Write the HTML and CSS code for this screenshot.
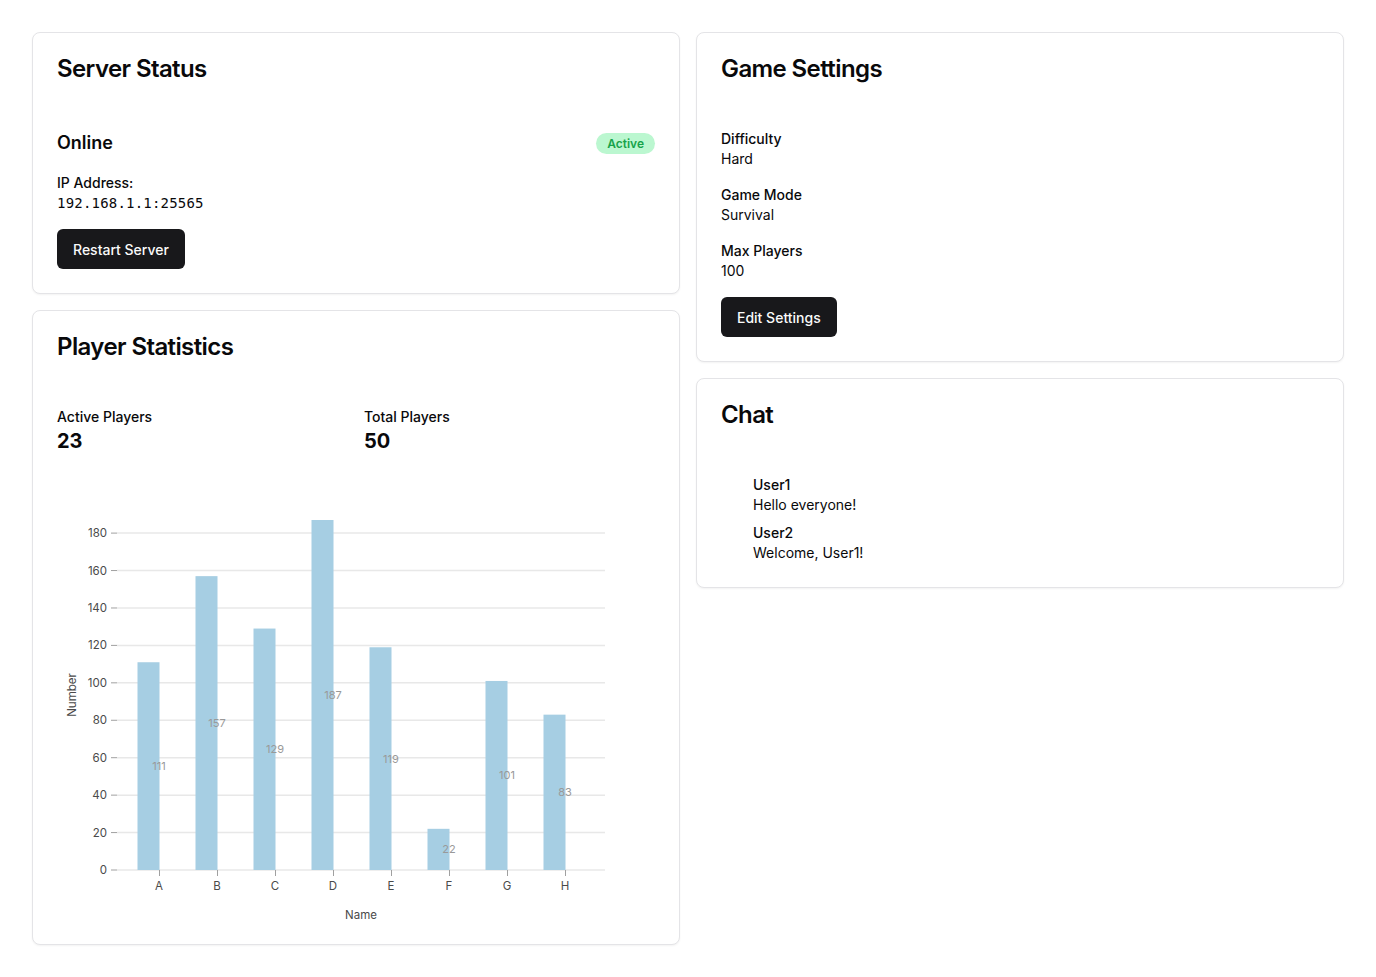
FILE: index.html
```html
<!DOCTYPE html>
<html lang="en">
<head>
<meta charset="utf-8">
<title>Server Dashboard</title>
<link rel="stylesheet" href="styles.css">
</head>
<body>
<div class="grid">
  <div class="col">
    <section class="card">
      <h2 class="card-title">Server Status</h2>
      <div class="status-row">
        <span class="status-text">Online</span>
        <span class="badge">Active</span>
      </div>
      <div class="field">
        <div class="label">IP Address:</div>
        <div class="mono">192.168.1.1:25565</div>
      </div>
      <button class="btn">Restart Server</button>
    </section>
    <section class="card">
      <h2 class="card-title">Player Statistics</h2>
      <div class="stats">
        <div>
          <div class="label">Active Players</div>
          <div class="stat-value">23</div>
        </div>
        <div>
          <div class="label">Total Players</div>
          <div class="stat-value">50</div>
        </div>
      </div>
      <svg class="chart" width="598" height="456" viewBox="0 0 598 456" font-family="Inter, 'Noto Sans', sans-serif">
        <g stroke="#e8e8e8" stroke-width="1.5">
          <line x1="60" x2="548" y1="401" y2="401"/>
          <line x1="60" x2="548" y1="363.57" y2="363.57"/>
          <line x1="60" x2="548" y1="326.13" y2="326.13"/>
          <line x1="60" x2="548" y1="288.70" y2="288.70"/>
          <line x1="60" x2="548" y1="251.27" y2="251.27"/>
          <line x1="60" x2="548" y1="213.83" y2="213.83"/>
          <line x1="60" x2="548" y1="176.40" y2="176.40"/>
          <line x1="60" x2="548" y1="138.97" y2="138.97"/>
          <line x1="60" x2="548" y1="101.54" y2="101.54"/>
          <line x1="60" x2="548" y1="64.10" y2="64.10"/>
        </g>
        <g stroke="#a0a0a0" stroke-width="1">
          <line x1="54" x2="60" y1="401" y2="401"/>
          <line x1="54" x2="60" y1="363.57" y2="363.57"/>
          <line x1="54" x2="60" y1="326.13" y2="326.13"/>
          <line x1="54" x2="60" y1="288.70" y2="288.70"/>
          <line x1="54" x2="60" y1="251.27" y2="251.27"/>
          <line x1="54" x2="60" y1="213.83" y2="213.83"/>
          <line x1="54" x2="60" y1="176.40" y2="176.40"/>
          <line x1="54" x2="60" y1="138.97" y2="138.97"/>
          <line x1="54" x2="60" y1="101.54" y2="101.54"/>
          <line x1="54" x2="60" y1="64.10" y2="64.10"/>
        </g>
        <g font-size="11.5" fill="#4a4a4a" text-anchor="end">
          <text x="50" y="405">0</text>
          <text x="50" y="367.57">20</text>
          <text x="50" y="330.13">40</text>
          <text x="50" y="292.70">60</text>
          <text x="50" y="255.27">80</text>
          <text x="50" y="217.83">100</text>
          <text x="50" y="180.40">120</text>
          <text x="50" y="142.97">140</text>
          <text x="50" y="105.54">160</text>
          <text x="50" y="68.10">180</text>
        </g>
        <g fill="#a6cee3">
          <rect x="80.5" y="193.24" width="22" height="207.76"/>
          <rect x="138.5" y="107.14" width="22" height="293.86"/>
          <rect x="196.5" y="159.55" width="22" height="241.45"/>
          <rect x="254.5" y="51" width="22" height="350"/>
          <rect x="312.5" y="178.27" width="22" height="222.73"/>
          <rect x="370.5" y="359.82" width="22" height="41.18"/>
          <rect x="428.5" y="211.96" width="22" height="189.04"/>
          <rect x="486.5" y="245.65" width="22" height="155.35"/>
        </g>
        <g stroke="#a0a0a0" stroke-width="1">
          <line x1="102.5" x2="102.5" y1="401" y2="407"/>
          <line x1="160.5" x2="160.5" y1="401" y2="407"/>
          <line x1="218.5" x2="218.5" y1="401" y2="407"/>
          <line x1="276.5" x2="276.5" y1="401" y2="407"/>
          <line x1="334.5" x2="334.5" y1="401" y2="407"/>
          <line x1="392.5" x2="392.5" y1="401" y2="407"/>
          <line x1="450.5" x2="450.5" y1="401" y2="407"/>
          <line x1="508.5" x2="508.5" y1="401" y2="407"/>
        </g>
        <g font-size="11.5" fill="#4a4a4a" text-anchor="middle">
          <text x="102" y="421">A</text>
          <text x="160" y="421">B</text>
          <text x="218" y="421">C</text>
          <text x="276" y="421">D</text>
          <text x="334" y="421">E</text>
          <text x="392" y="421">F</text>
          <text x="450" y="421">G</text>
          <text x="508" y="421">H</text>
        </g>
        <g font-size="11" fill="#999" text-anchor="middle">
          <text x="102" y="301">111</text>
          <text x="160" y="258">157</text>
          <text x="218" y="284">129</text>
          <text x="276" y="230">187</text>
          <text x="334" y="294">119</text>
          <text x="392" y="384">22</text>
          <text x="450" y="310">101</text>
          <text x="508" y="327">83</text>
        </g>
        <text x="304" y="450" font-size="11.5" fill="#4a4a4a" text-anchor="middle">Name</text>
        <text transform="translate(19 226) rotate(-90)" font-size="11.5" fill="#4a4a4a" text-anchor="middle">Number</text>
      </svg>
    </section>
  </div>
  <div class="col">
    <section class="card">
      <h2 class="card-title">Game Settings</h2>
      <div class="settings">
        <div>
          <div class="label">Difficulty</div>
          <div class="value">Hard</div>
        </div>
        <div>
          <div class="label">Game Mode</div>
          <div class="value">Survival</div>
        </div>
        <div>
          <div class="label">Max Players</div>
          <div class="value">100</div>
        </div>
      </div>
      <button class="btn">Edit Settings</button>
    </section>
    <section class="card">
      <h2 class="card-title">Chat</h2>
      <div class="chat">
        <div class="msg">
          <div class="label">User1</div>
          <div class="value">Hello everyone!</div>
        </div>
        <div class="msg">
          <div class="label">User2</div>
          <div class="value">Welcome, User1!</div>
        </div>
      </div>
    </section>
  </div>
</div>
</body>
</html>
```

FILE: styles.css
```css
* { box-sizing: border-box; }
html, body { margin: 0; background: #ffffff; }
body {
  padding: 32px;
  font-family: Inter, "Noto Sans", sans-serif;
  color: #09090b;
  font-size: 14px;
  line-height: 20px;
}
.grid {
  display: grid;
  grid-template-columns: 1fr 1fr;
  gap: 16px;
  align-items: start;
}
.col {
  display: flex;
  flex-direction: column;
  gap: 16px;
}
.card {
  border: 1px solid #e4e4e7;
  border-radius: 8px;
  background: #fff;
  box-shadow: 0 1px 2px rgba(0, 0, 0, 0.05);
  padding: 24px;
}
.card-title {
  margin: 0 0 48px;
  font-size: 24px;
  line-height: 24px;
  font-weight: 600;
  letter-spacing: -0.025em;
}
.status-row {
  display: flex;
  justify-content: space-between;
  align-items: center;
  height: 28px;
}
.status-text {
  font-size: 18px;
  line-height: 28px;
  font-weight: 600;
}
.badge {
  background: #bbf7d0;
  color: #16a34a;
  font-size: 12px;
  line-height: 17px;
  font-weight: 600;
  padding: 2px 11px;
  border-radius: 9999px;
}
.field { margin-top: 16px; }
.label { font-weight: 500; }
.mono {
  font-family: "DejaVu Sans Mono", "Liberation Mono", monospace;
  font-size: 14px;
  line-height: 20px;
  letter-spacing: 0.2px;
}
.btn {
  display: inline-flex;
  align-items: center;
  height: 40px;
  padding: 0 16px;
  margin-top: 16px;
  border: none;
  border-radius: 6px;
  background: #18181b;
  color: #fafafa;
  font-family: Inter, "Noto Sans", sans-serif;
  font-size: 14px;
  font-weight: 500;
}
.stats {
  display: grid;
  grid-template-columns: 1fr 1fr;
  gap: 16px;
}
.stat-value {
  font-size: 20px;
  line-height: 28px;
  font-weight: 700;
}
.chart {
  display: block;
  margin-top: 14px;
  margin-bottom: -5px;
}
.settings {
  display: flex;
  flex-direction: column;
  gap: 16px;
}
.chat {
  padding-left: 32px;
  display: flex;
  flex-direction: column;
  gap: 8px;
}
```
